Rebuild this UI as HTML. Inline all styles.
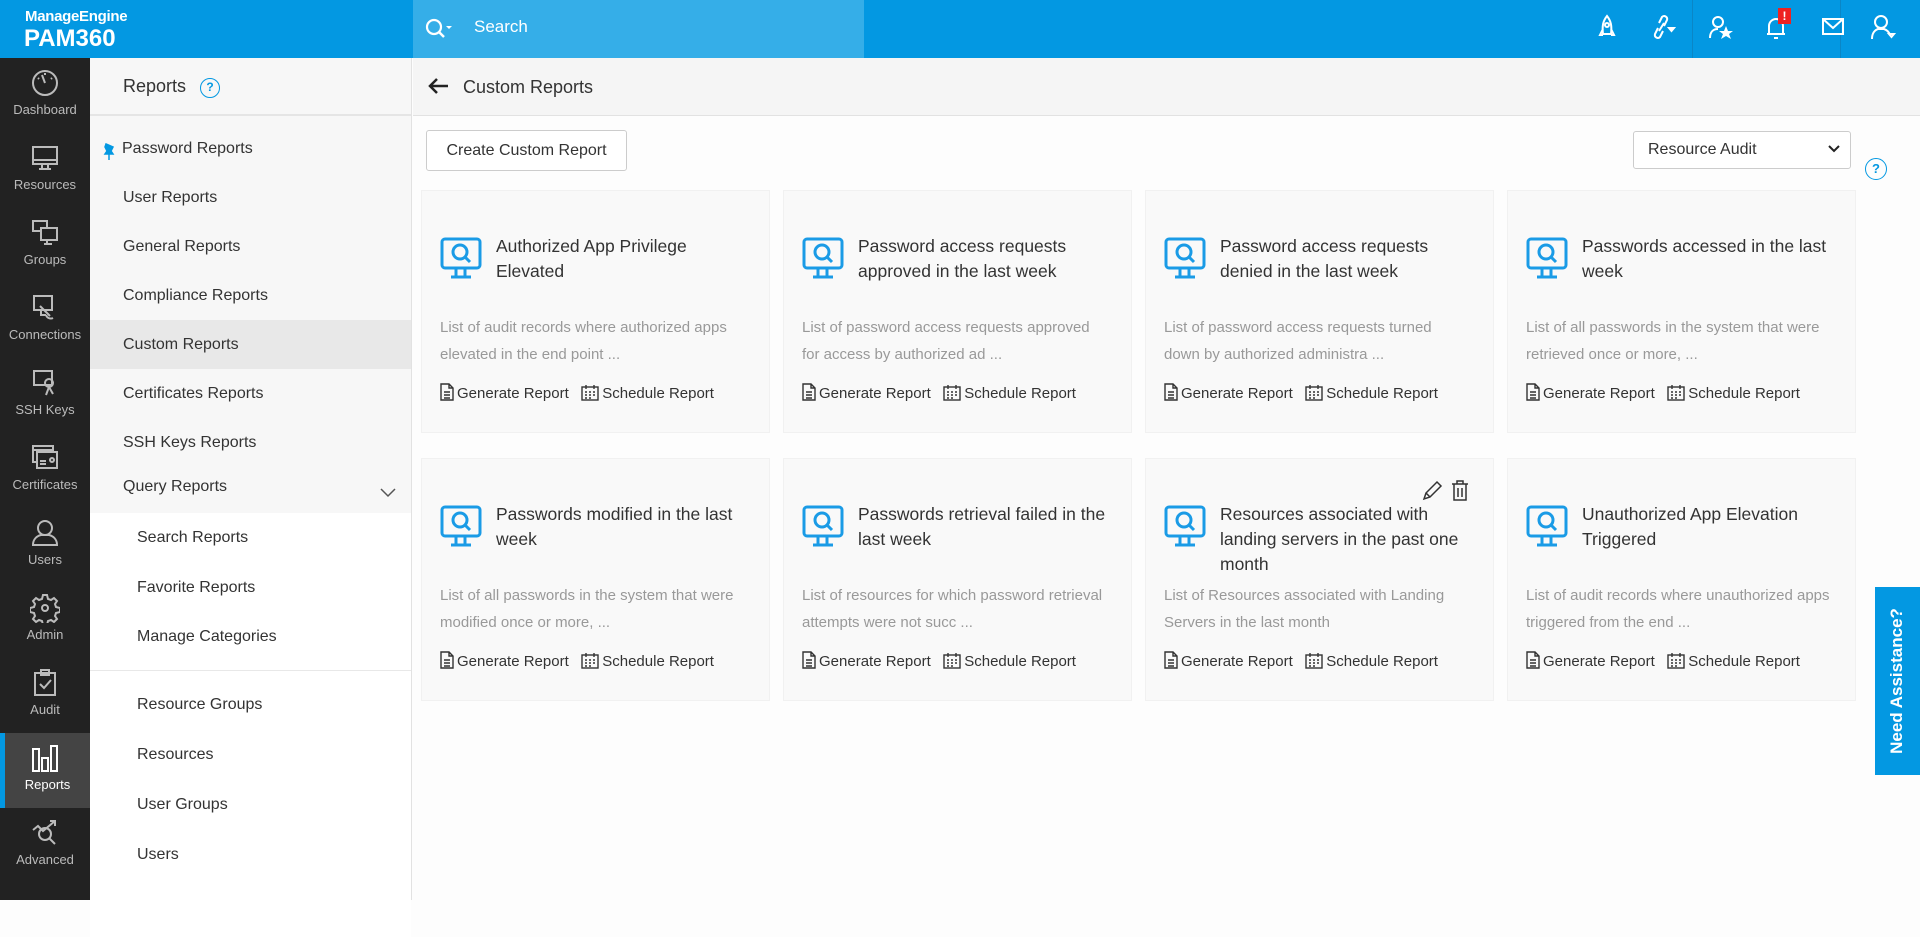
<!DOCTYPE html>
<html><head><meta charset="utf-8"><style>
*{box-sizing:border-box;margin:0;padding:0}
body{width:1920px;height:900px;overflow:hidden;background:#fdfdfd;font-family:"Liberation Sans",sans-serif;color:#333;position:relative}
.abs{position:absolute}
.hdr{left:0;top:0;width:1920px;height:58px;background:#0398e2}
.search{left:413px;top:0;width:451px;height:58px;background:#35aee8}
.nav{left:0;top:58px;width:90px;height:842px;background:#222}
.ni{position:absolute;left:0;width:90px;height:75px;text-align:center;color:#bbb;font-size:13px}
.ni svg{display:block;margin:10px auto 4px}
.ni.act{background:#444;color:#fff;border-left:5px solid #0398e2}
.side{left:90px;top:58px;width:322px;height:842px;background:#f7f7f7;border-right:1px solid #e2e2e2}
.si{position:absolute;left:33px;font-size:16px;color:#333}
.sub{position:absolute;left:47px;font-size:16px;color:#333}
.card{position:absolute;width:349px;height:243px;background:#f9f9f9;border:1px solid #f1f1f1}
.card .ic{position:absolute;left:18px;top:46px}
.card .t{position:absolute;left:74px;top:43px;width:260px;font-size:17.5px;line-height:25px;color:#333}
.card .d{position:absolute;left:18px;top:123px;width:305px;font-size:15px;line-height:27px;color:#999}
.card .a{position:absolute;left:18px;top:192px;font-size:15px;color:#333;white-space:nowrap}
.a svg{vertical-align:-3px;margin-right:3px}
</style></head><body>
<div class="abs hdr"></div>
<div class="abs search"></div>
<div class="abs" style="left:25px;top:8px;color:#fff;font-size:15px;font-weight:bold;letter-spacing:-.3px">ManageEngine</div>
<div class="abs" style="left:24px;top:25px;color:#fff;font-size:24px;font-weight:bold">PAM360</div>
<svg class="abs" style="left:424px;top:17px" width="30" height="24"><circle cx="10" cy="10" r="7" fill="none" stroke="#fff" stroke-width="2.2"/><path d="M15 15l5 5" stroke="#fff" stroke-width="2.5"/><path d="M22 9h6l-3 3z" fill="#fff"/></svg>
<div class="abs" style="left:474px;top:17px;color:#fff;font-size:17px">Search</div>
<div class="abs" style="left:1692px;top:0;width:1px;height:58px;background:#0a86c6"></div>
<div class="abs" style="left:1840px;top:0;width:1px;height:58px;background:#0a86c6"></div>
<svg class="abs" style="left:1596px;top:14px" width="22" height="28" fill="none" stroke="#fff" stroke-width="2"><path d="M11 2c-4 5-5 10-4 18h8c1-8 0-13-4-18zM7 15l-3 6h3M15 15l3 6h-3"/><circle cx="11" cy="11" r="2"/></svg>
<svg class="abs" style="left:1650px;top:14px" width="26" height="28" fill="none" stroke="#fff" stroke-width="2"><path d="M8 14l-3 6a3 3 0 0 0 5 3l3-6M14 12l3-6a3 3 0 0 0-5-3l-3 6M9 17l5-8"/><path d="M19 14h5l-2.5 3z" fill="#fff"/></svg>
<svg class="abs" style="left:1708px;top:14px" width="26" height="28" fill="none" stroke="#fff" stroke-width="2"><circle cx="10" cy="8" r="5"/><path d="M2 24c0-6 3-9 8-9"/><path d="M18 12l2 5h5l-4 3 2 5-5-3-5 3 2-5-4-3h5z" fill="#fff" stroke="none"/></svg>
<svg class="abs" style="left:1765px;top:14px" width="22" height="28" fill="none" stroke="#fff" stroke-width="2"><path d="M4 20V12a7 7 0 0 1 14 0v8zM2 20h18M9 24h4"/></svg>
<div class="abs" style="left:1778px;top:8px;width:13px;height:16px;background:#e22;color:#fff;font-size:12px;font-weight:bold;text-align:center;line-height:16px">!</div>
<svg class="abs" style="left:1822px;top:18px" width="22" height="18" fill="none" stroke="#fff" stroke-width="2"><rect x="1" y="1" width="20" height="15"/><path d="M1 1l10 9 10-9"/></svg>
<svg class="abs" style="left:1870px;top:14px" width="26" height="28" fill="none" stroke="#fff" stroke-width="2"><circle cx="11" cy="8" r="6"/><path d="M2 25c0-6 3-9 6-10h6c3 1 5 3 6 6M19 20h5l-2.5 3z"/></svg>

<div class="abs nav">
<div class="ni" style="top:0"><svg width="30" height="30" fill="none" stroke="#bbb" stroke-width="2"><circle cx="15" cy="15" r="12"/><path d="M15 15l-3-8M8 10l1 1M22 10l-1 1M15 5v2"/></svg>Dashboard</div>
<div class="ni" style="top:75px"><svg width="30" height="30" fill="none" stroke="#bbb" stroke-width="2"><rect x="3" y="4" width="24" height="17"/><path d="M3 17h24M12 21v4M18 21v4M9 26h12"/></svg>Resources</div>
<div class="ni" style="top:150px"><svg width="30" height="30" fill="none" stroke="#bbb" stroke-width="2"><rect x="3" y="3" width="14" height="10"/><rect x="11" y="10" width="16" height="12" fill="#222"/><path d="M17 22v4M14 26h8"/></svg>Groups</div>
<div class="ni" style="top:225px"><svg width="30" height="30" fill="none" stroke="#bbb" stroke-width="2"><rect x="4" y="3" width="18" height="14"/><path d="M10 13l10 10M16 22a5 5 0 0 0 7 3M11 17v5h5"/></svg>Connections</div>
<div class="ni" style="top:300px"><svg width="30" height="30" fill="none" stroke="#bbb" stroke-width="2"><rect x="4" y="3" width="18" height="14"/><circle cx="19" cy="15" r="4"/><path d="M19 19l-3 8M19 19l4 7"/></svg>SSH Keys</div>
<div class="ni" style="top:375px"><svg width="30" height="30" fill="none" stroke="#bbb" stroke-width="2"><rect x="3" y="3" width="20" height="16"/><rect x="7" y="9" width="20" height="16" fill="#222"/><path d="M10 18h6M10 21h6M3 7h20"/><circle cx="22" cy="17" r="2"/></svg>Certificates</div>
<div class="ni" style="top:450px"><svg width="30" height="30" fill="none" stroke="#bbb" stroke-width="2"><circle cx="15" cy="10" r="7"/><path d="M3 27c0-6 4-9 8-10h8c4 1 8 4 8 10z"/></svg>Users</div>
<div class="ni" style="top:525px"><svg width="30" height="30" fill="none" stroke="#bbb" stroke-width="2"><path d="M13 2h4l1 4 3 1 3-2 3 3-2 3 1 3 4 1v4l-4 1-1 3 2 3-3 3-3-2-3 1-1 4h-4l-1-4-3-1-3 2-3-3 2-3-1-3-4-1v-4l4-1 1-3-2-3 3-3 3 2 3-1z"/><circle cx="15" cy="15" r="3"/></svg>Admin</div>
<div class="ni" style="top:600px"><svg width="30" height="30" fill="none" stroke="#bbb" stroke-width="2"><rect x="5" y="5" width="20" height="22"/><rect x="11" y="2" width="8" height="5"/><path d="M10 16l4 4 7-8"/></svg>Audit</div>
<div class="ni act" style="top:675px"><svg width="30" height="30" fill="none" stroke="#fff" stroke-width="2" style="margin-left:25px"><rect x="3" y="6" width="6" height="22"/><rect x="12" y="15" width="6" height="13"/><rect x="21" y="3" width="6" height="25"/></svg>Reports</div>
<div class="ni" style="top:750px"><svg width="30" height="30" fill="none" stroke="#bbb" stroke-width="2"><circle cx="15" cy="16" r="6"/><path d="M19 20l6 6M3 12l5-4 5 5 12-10M20 3h5v5"/></svg>Advanced</div>
</div>

<div class="abs side">
<div class="abs" style="left:0;top:0;width:321px;height:58px;border-bottom:2px solid #e5e5e5"></div>
<div class="abs" style="left:33px;top:18px;font-size:18px;color:#333">Reports</div>
<div class="abs" style="left:110px;top:20px;width:20px;height:20px;border:1.6px solid #0398e2;border-radius:50%;color:#0398e2;font-size:12px;font-weight:bold;text-align:center;line-height:17px">?</div>
<svg class="abs" style="left:13px;top:84px" width="12" height="18"><path d="M3 2l7 3-2 4 2 3H2l2-3-2-4zM6 12v6" fill="#0398e2" stroke="#0398e2" stroke-width="1.5"/></svg>
<div class="si" style="top:82px;left:32px">Password Reports</div>
<div class="si" style="top:131px">User Reports</div>
<div class="si" style="top:180px">General Reports</div>
<div class="si" style="top:229px">Compliance Reports</div>
<div class="abs" style="left:0;top:262px;width:321px;height:49px;background:#e8e8e8"></div>
<div class="si" style="top:278px">Custom Reports</div>
<div class="si" style="top:327px">Certificates Reports</div>
<div class="si" style="top:376px">SSH Keys Reports</div>
<div class="si" style="top:420px">Query Reports</div>
<svg class="abs" style="left:290px;top:430px" width="16" height="10" fill="none" stroke="#555" stroke-width="1.5"><path d="M1 1l7 7 7-7"/></svg>
<div class="abs" style="left:0;top:455px;width:321px;height:424px;background:#fff"></div>
<div class="abs" style="left:0;top:612px;width:321px;height:1px;background:#e8e8e8"></div>
<div class="sub" style="top:471px">Search Reports</div>
<div class="sub" style="top:521px">Favorite Reports</div>
<div class="sub" style="top:570px">Manage Categories</div>
<div class="sub" style="top:638px">Resource Groups</div>
<div class="sub" style="top:688px">Resources</div>
<div class="sub" style="top:738px">User Groups</div>
<div class="sub" style="top:788px">Users</div>
</div>

<div class="abs" style="left:413px;top:58px;width:1507px;height:58px;background:#f5f5f5;border-bottom:1px solid #e2e2e2"></div>
<svg class="abs" style="left:427px;top:77px" width="22" height="18" fill="none" stroke="#222" stroke-width="2.5"><path d="M21 9H3M10 2L3 9l7 7"/></svg>
<div class="abs" style="left:463px;top:77px;font-size:18px;color:#333">Custom Reports</div>
<div class="abs" style="left:426px;top:130px;width:201px;height:41px;border:1px solid #ccc;border-radius:3px;background:#fff;font-size:16px;line-height:39px;text-align:center;color:#333">Create Custom Report</div>
<div class="abs" style="left:1633px;top:131px;width:218px;height:38px;border:1px solid #ccc;border-radius:3px;background:#fff;font-size:16px;line-height:36px;padding-left:14px;color:#333">Resource Audit</div>
<svg class="abs" style="left:1828px;top:145px" width="12" height="9" fill="none" stroke="#222" stroke-width="2"><path d="M1 1l5 5 5-5"/></svg>
<div class="abs" style="left:1865px;top:158px;width:22px;height:22px;border:1.6px solid #0398e2;border-radius:50%;color:#0398e2;font-size:13px;font-weight:bold;text-align:center;line-height:19px">?</div>

<div id="cards"></div>
<script>
const data=[
["Authorized App Privilege Elevated","List of audit records where authorized apps elevated in the end point ..."],
["Password access requests approved in the last week","List of password access requests approved for access by authorized ad ..."],
["Password access requests denied in the last week","List of password access requests turned down by authorized administra ..."],
["Passwords accessed in the last week","List of all passwords in the system that were retrieved once or more, ..."],
["Passwords modified in the last week","List of all passwords in the system that were modified once or more, ..."],
["Passwords retrieval failed in the last week","List of resources for which password retrieval attempts were not succ ..."],
["Resources associated with landing servers in the past one month","List of Resources associated with Landing Servers in the last month"],
["Unauthorized App Elevation Triggered","List of audit records where unauthorized apps triggered from the end ..."]];
const xs=[421,783,1145,1507],ys=[190,458];
const ic='<svg width="44" height="44" fill="none" stroke="#1a9be6" stroke-width="3"><rect x="2" y="2" width="38" height="29" rx="3"/><circle cx="20" cy="15" r="7"/><path d="M25 20l5 5M16 31v8M25 31v8M11 40h20"/></svg>';
const gen='<svg width="14" height="18" fill="none" stroke="#333" stroke-width="1.4"><path d="M1 1h8l4 4v12H1zM9 1v4h4M4 9h6M4 12h6M4 15h6"/></svg>';
const sch='<svg width="18" height="16" fill="none" stroke="#333" stroke-width="1.4"><rect x="1" y="2" width="16" height="13"/><path d="M5 0v4M13 0v4" /><path d="M4 7h2M8 7h2M12 7h2M4 10h2M8 10h2M12 10h2M4 13h2M8 13h2" stroke-width="1.6"/></svg>';
let h='';
data.forEach((d,i)=>{const x=xs[i%4],y=ys[i>>2];
h+=`<div class="card" style="left:${x}px;top:${y}px"><div class="ic">${ic}</div><div class="t">${d[0]}</div><div class="d">${d[1]}</div><div class="a">${gen}Generate Report &nbsp;&nbsp;${sch}Schedule Report</div>${i==6?'<svg style="position:absolute;left:275px;top:20px" width="50" height="22" fill="none" stroke="#333" stroke-width="1.5"><path d="M3 20l2-6 11-11 4 4-11 11zM5 14l4 4"/><path d="M31 5h16M36 5V2h6v3M33 5v16h12V5M37 9v9M41 9v9"/></svg>':''}</div>`;});
document.getElementById('cards').innerHTML=h;
</script>
<div class="abs" style="left:1875px;top:587px;width:45px;height:188px;background:#0398e2"></div>
<div class="abs" style="left:1897px;top:681px;transform:translate(-50%,-50%) rotate(-90deg);color:#fff;font-size:17px;font-weight:bold;white-space:nowrap">Need Assistance?</div>
</body></html>
